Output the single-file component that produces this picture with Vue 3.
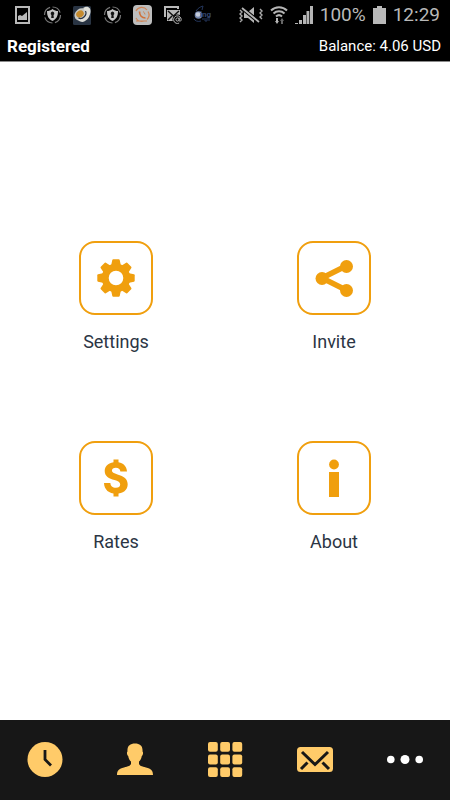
<script setup>
const tiles = [
  { id: 'settings', label: 'Settings' },
  { id: 'invite', label: 'Invite' },
  { id: 'rates', label: 'Rates' },
  { id: 'about', label: 'About' },
]
const teeth = [0, 45, 90, 135, 180, 225, 270, 315]
const keys = [0, 1, 2, 3, 4, 5, 6, 7, 8]
</script>

<template>
  <div class="screen">
    <div class="status">
      <div class="notices">
        <svg viewBox="0 0 30 30" class="notice">
          <path fill="#b9b9b9" fill-rule="evenodd" d="M7 6h15v18H7zM9 8v14h11V8z" />
          <path fill="#b9b9b9" d="M10 20v-4l2-1 2 1 5-4v8z" />
        </svg>
        <svg viewBox="0 0 30 30" class="notice">
          <circle cx="14.500" cy="15" r="8" fill="none" stroke="#777" stroke-width="1.200" stroke-dasharray="10 2.500" />
          <path fill="#c4c4c4" d="M14.500 9c2 1.500 3.500 2 5.500 2 0 5-1.500 8-5.500 10-4-2-5.500-5-5.500-10 2 0 3.500-.5 5.500-2z" />
          <path fill="#111" d="M14.500 11.500a2 2 0 0 1 1 3.600l.3 2.900h-2.600l.3-2.900a2 2 0 0 1 1-3.600z" />
        </svg>
        <svg viewBox="0 0 30 30" class="notice">
          <rect x="5" y="6" width="18" height="19" rx="1.500" fill="#293443" />
          <ellipse cx="13" cy="14.500" rx="7" ry="5.800" transform="rotate(-35 13 14.500)" fill="#c9c9c4" />
          <path fill="#deded8" d="M15 8c5-3 8 0 7.500 4s-3 9-8 10c-2 0-4-1-5-3 7 1 11-5 5.500-11z" />
          <ellipse cx="12" cy="14" rx="4" ry="3.300" transform="rotate(-35 12 14)" fill="#c58b2e" />
          <path d="M10.500 18c4 2 9-3 7-7" fill="none" stroke="#293443" stroke-width="1.200" />
        </svg>
        <svg viewBox="0 0 30 30" class="notice">
          <circle cx="14.500" cy="15" r="8" fill="none" stroke="#777" stroke-width="1.200" stroke-dasharray="10 2.500" />
          <path fill="#c4c4c4" d="M14.500 9c2 1.500 3.500 2 5.500 2 0 5-1.500 8-5.500 10-4-2-5.500-5-5.500-10 2 0 3.500-.5 5.500-2z" />
          <path fill="#111" d="M14.500 11.500a2 2 0 0 1 1 3.600l.3 2.900h-2.600l.3-2.900a2 2 0 0 1 1-3.600z" />
        </svg>
        <svg viewBox="0 0 30 30" class="notice">
          <rect x="5" y="5" width="19" height="20" rx="4" fill="#bdbdbd" />
          <path d="M8 11a6.500 6.500 0 0 1 11-1M20 11.500a6.500 6.500 0 0 1-1 8M16 21a6.500 6.500 0 0 1-8-3M8 21h11" fill="none" stroke="#d08455" stroke-width="1.200" />
          <path d="M11.500 11.500c0 4 2.500 6.500 6 6.500" fill="none" stroke="#d07038" stroke-width="1.700" />
          <path d="M15 11.500a4 4 0 0 1 2 3" fill="none" stroke="#d08455" />
        </svg>
        <svg viewBox="0 0 30 30" class="notice">
          <path d="M7 17V7h13v2" fill="none" stroke="#b9b9b9" stroke-width="2" />
          <path fill="#b9b9b9" d="M9 10h13v11H9z" />
          <path d="M10 11l5.500 5 5.500-5M10 20l4-4" fill="none" stroke="#111" stroke-width="1.500" />
          <circle cx="19.500" cy="19.500" r="5" fill="#000" />
          <circle cx="19.500" cy="19.500" r="1.600" fill="none" stroke="#b9b9b9" />
          <path d="M21.200 17.500v3c0 1.300 2 1 2-1a3.800 3.800 0 1 0-2 3.500" fill="none" stroke="#b9b9b9" />
        </svg>
        <svg viewBox="0 0 30 30" class="notice">
          <path d="M8 11c2-3 4-4 7-5l-1 4M6 19c1 2 4 3 7 2M15 20v-2M17 18v3h2v-3M21 18v3" fill="none" stroke="#24365c" />
          <circle cx="10.500" cy="15" r="3.800" fill="#7284aa" />
          <circle cx="10" cy="14.500" r="2.300" fill="#c3cad8" />
          <text x="12" y="17" class="mark">ing</text>
        </svg>
      </div>
      <div class="system">
        <svg viewBox="0 0 26 20" class="mute">
          <path fill="#b5b5b5" d="M7 7h4l6-5v16l-6-5H7z" />
          <path d="M5 3l17 14" stroke="#000" stroke-width="4" />
          <path d="M5 3l17 14" stroke="#b5b5b5" stroke-width="1.800" />
          <path d="M3 5l2 2-2 2 2 2-2 2 2 2-2 2M23 4l2 2-2 2 2 2-2 2 2 2" fill="none" stroke="#aaa" stroke-width="1.400" />
        </svg>
        <svg viewBox="0 0 18 20" class="wifi">
          <path d="M1 5.500a11.500 11.500 0 0 1 16 0M3.500 8.500a8 8 0 0 1 11 0M6 11.500a4.500 4.500 0 0 1 6 0" fill="none" stroke="#b5b5b5" stroke-width="2" />
          <path fill="#b5b5b5" d="M6 13h2v3h1l-2 3-2-3h1z" />
          <path fill="#666" d="M11 19v-3h-1l2-3 2 3h-1v3z" />
        </svg>
        <svg viewBox="0 0 18 20" class="signal">
          <path fill="#b5b5b5" d="M0 18h3v1H0zM4 15h3v4H4zM8 10h3v9H8zM11.500 6h2.800v13h-2.800zM15 1h3v18h-3z" />
        </svg>
        <span class="percent">100%</span>
        <svg viewBox="0 0 13 18" class="battery">
          <path fill="#b9b9b9" d="M4 0h5v2h4v16H0V2h4z" />
        </svg>
        <time class="clock">12:29</time>
      </div>
    </div>

    <header class="account">
      <strong class="state">Registered</strong>
      <span class="balance">Balance: 4.06 USD</span>
    </header>

    <main class="menu">
      <button v-for="tile in tiles" :key="tile.id" type="button" class="tile">
        <span class="frame">
          <svg viewBox="0 0 40 40" class="glyph">
            <template v-if="tile.id === 'settings'">
              <path v-for="angle in teeth" :key="angle" :transform="`rotate(${angle} 20 20)`" d="M15 8l1.300-6q.2-.7.9-.7h5.600q.7 0 .9.700L25 8z" />
              <circle cx="20" cy="20" r="10.800" fill="none" stroke="#f09f0e" stroke-width="7" />
            </template>
            <template v-else-if="tile.id === 'invite'">
              <path d="M32 8L8 20l24 12" fill="none" stroke="#f09f0e" stroke-width="5.500" />
              <circle cx="32.500" cy="8.500" r="6.500" />
              <circle cx="8" cy="20.500" r="6.500" />
              <circle cx="32.500" cy="32.500" r="6.500" />
            </template>
            <template v-else-if="tile.id === 'rates'">
              <path d="M17.500 1.500h5V7h-5zM17.500 33h5v5.500h-5z" />
              <path d="M31 13.400C30.600 7.600 26.500 4 20 4 13.500 4 8.700 7.500 8.700 12.900c0 5.300 4.300 7.600 9.800 9.200 3.700 1.200 5.700 2.100 5.700 4.400 0 2-1.600 3.300-4.200 3.300-3.500 0-5.600-1.800-5.600-4.800H8C8.200 31.800 13 35.700 20 35.700c7 0 11.700-3.600 11.700-9.400 0-5.400-3.900-7.800-10.200-9.800-3.700-1.200-5.600-1.900-5.600-3.900 0-1.700 1.500-2.800 4-2.800 2.500 0 4.200 1.300 4.500 3.600z" />
            </template>
            <template v-else>
              <circle cx="20" cy="6.500" r="4.900" />
              <path d="M15 14h10v25H15z" />
            </template>
          </svg>
        </span>
        <span class="label">{{ tile.label }}</span>
      </button>
    </main>

    <nav class="tabs">
      <button type="button" class="tab" aria-label="Recent calls">
        <svg viewBox="0 0 36 36">
          <circle cx="18" cy="17.500" r="17.500" />
          <path d="M18 8v9.500l6 6" fill="none" stroke="#171717" stroke-width="2.800" />
        </svg>
      </button>
      <button type="button" class="tab" aria-label="Contacts">
        <svg viewBox="0 0 36 36">
          <path d="M18 1.500c5 0 8 2.500 7.500 8 1 .5.600 3.500-.7 4.500-.5 3-1.600 4.500-2.800 5.500v2c0 2 3 3 7 4 5 1.300 7 3 7 7.500H0c0-4.500 2-6.200 7-7.500 4-1 7-2 7-4v-2c-1.200-1-2.300-2.500-2.800-5.500-1.300-1-1.700-4-.7-4.500C10 4 13 1.500 18 1.500z" />
        </svg>
      </button>
      <button type="button" class="tab" aria-label="Keypad">
        <svg viewBox="0 0 36 36">
          <rect v-for="key in keys" :key="key" :x="1 + (key % 3) * 12.200" :y="Math.floor(key / 3) * 12.600" width="9.800" height="9.800" rx="2" />
        </svg>
      </button>
      <button type="button" class="tab" aria-label="Messages">
        <svg viewBox="0 0 36 36">
          <rect x="0" y="5" width="36" height="25" rx="3.500" />
          <path d="M5 10l13 12.500L31 10M4 27l6.500-6.500M32 27l-6.500-6.500" fill="none" stroke="#171717" stroke-width="3" />
        </svg>
      </button>
      <button type="button" class="tab more" aria-label="More">
        <svg viewBox="0 0 36 36">
          <circle cx="3.800" cy="17.500" r="3.800" />
          <circle cx="18" cy="17.500" r="4.500" />
          <circle cx="32.200" cy="17.500" r="3.800" />
        </svg>
      </button>
    </nav>
  </div>
</template>

<style>
body {
  background: #fff;
}
</style>

<style scoped>
.screen {
  display: flex;
  flex-direction: column;
  min-height: 100vh;
  font-family: Roboto, "Liberation Sans", sans-serif;
}

button {
  border: 0;
  padding: 0;
  background: none;
  font: inherit;
  cursor: pointer;
}

svg {
  display: block;
  flex: none;
}

.status {
  display: flex;
  justify-content: space-between;
  height: 30px;
  padding: 0 10px 0 8px;
  background: #000;
  color: #b9b9b9;
}

.notices,
.system {
  display: flex;
  align-items: center;
}

.notice {
  width: 30px;
  height: 30px;
}

.mark {
  fill: #34466f;
  font-size: 8px;
  font-weight: 700;
}

.system {
  gap: 7px;
}

.mute {
  width: 26px;
  height: 20px;
}

.wifi,
.signal {
  width: 18px;
  height: 20px;
}

.percent,
.clock {
  font-size: 19px;
  line-height: 32px;
}

.battery {
  width: 13px;
  height: 18px;
}

.account {
  display: flex;
  align-items: center;
  justify-content: space-between;
  height: 31px;
  padding: 0 9px 0 7px;
  border-bottom: 1px solid #8a8a8a;
  background: #000;
  color: #fff;
}

.state {
  font-size: 17px;
  font-weight: 700;
  line-height: 32px;
}

.balance {
  font-size: 15px;
}

.menu {
  display: grid;
  flex: 1;
  grid-template-columns: 1fr 1fr;
  align-content: center;
  row-gap: 86px;
  padding: 13px 7px 0;
  background: #fff;
}

.tile {
  display: flex;
  flex-direction: column;
  align-items: center;
  justify-self: center;
  gap: 14px;
  color: #2b3544;
}

.frame {
  display: flex;
  align-items: center;
  justify-content: center;
  box-sizing: border-box;
  width: 74px;
  height: 74px;
  border: 2px solid #f09f0e;
  border-radius: 16px;
}

.glyph {
  width: 40px;
  height: 40px;
  fill: #f09f0e;
}

.label {
  font-size: 18px;
  line-height: 26px;
}

.tabs {
  display: grid;
  grid-template-columns: repeat(5, 1fr);
  height: 80px;
  background: #171717;
}

.tab {
  display: flex;
  align-items: center;
  justify-content: center;
  fill: #ffcb69;
}

.tab svg {
  width: 36px;
  height: 36px;
}

.more {
  fill: #fff;
}
</style>
